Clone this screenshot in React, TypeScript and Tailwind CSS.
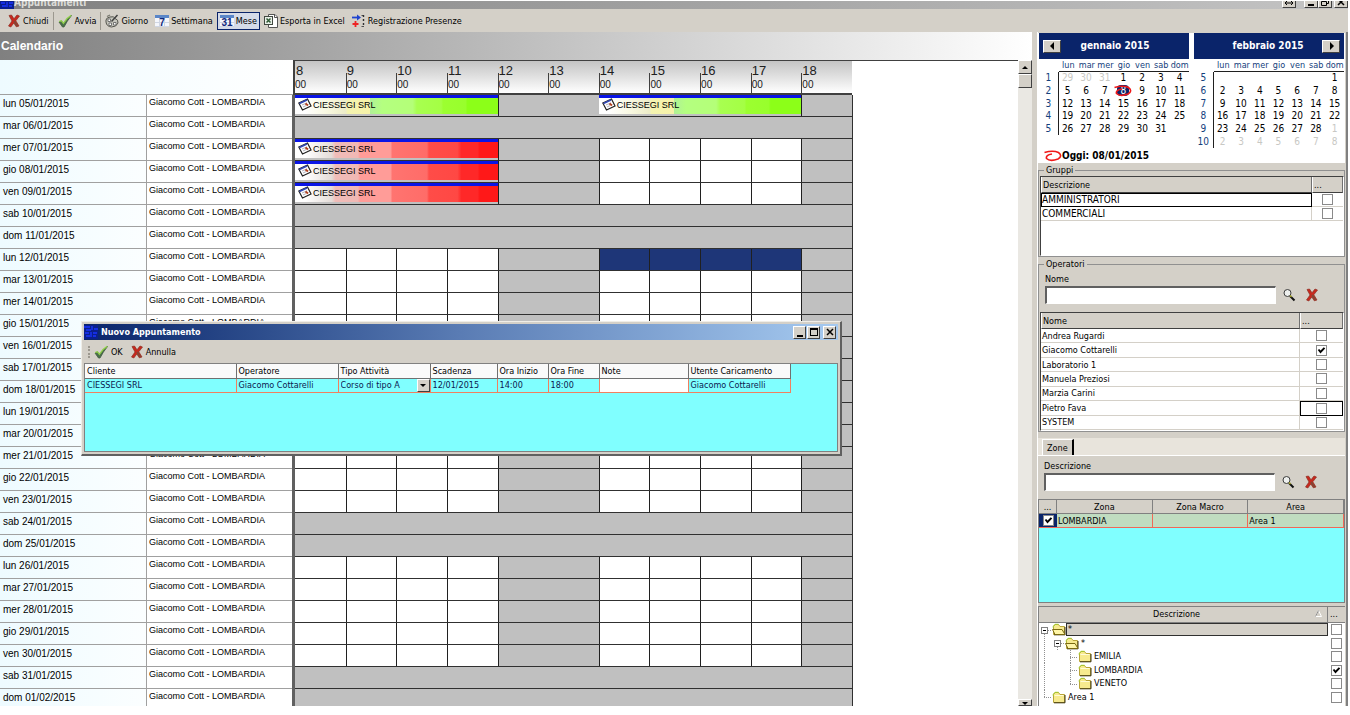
import React from 'react';
import clsx from 'clsx';

const TAHOMA = "font-['DejaVu_Sans_Condensed','DejaVu_Sans',sans-serif]";
const ARIAL = "font-['Liberation_Sans',sans-serif]";
const RAISED = 'border border-t-white border-l-white border-r-[#404040] border-b-[#404040] bg-[#d4d0c8]';

const HOURS = [8, 9, 10, 11, 12, 13, 14, 15, 16, 17, 18];

type Block = { start: number; color: 'green' | 'red' };
type Day = { label: string; holiday?: boolean; selected?: boolean; blocks?: Block[] };

const DAYS: Day[] = [
  { label: 'lun 05/01/2015', blocks: [{ start: 8, color: 'green' }, { start: 14, color: 'green' }] },
  { label: 'mar 06/01/2015', holiday: true },
  { label: 'mer 07/01/2015', blocks: [{ start: 8, color: 'red' }] },
  { label: 'gio 08/01/2015', blocks: [{ start: 8, color: 'red' }] },
  { label: 'ven 09/01/2015', blocks: [{ start: 8, color: 'red' }] },
  { label: 'sab 10/01/2015', holiday: true },
  { label: 'dom 11/01/2015', holiday: true },
  { label: 'lun 12/01/2015', selected: true },
  { label: 'mar 13/01/2015' },
  { label: 'mer 14/01/2015' },
  { label: 'gio 15/01/2015' },
  { label: 'ven 16/01/2015' },
  { label: 'sab 17/01/2015', holiday: true },
  { label: 'dom 18/01/2015', holiday: true },
  { label: 'lun 19/01/2015' },
  { label: 'mar 20/01/2015' },
  { label: 'mer 21/01/2015' },
  { label: 'gio 22/01/2015' },
  { label: 'ven 23/01/2015' },
  { label: 'sab 24/01/2015', holiday: true },
  { label: 'dom 25/01/2015', holiday: true },
  { label: 'lun 26/01/2015' },
  { label: 'mar 27/01/2015' },
  { label: 'mer 28/01/2015' },
  { label: 'gio 29/01/2015' },
  { label: 'ven 30/01/2015' },
  { label: 'sab 31/01/2015', holiday: true },
  { label: 'dom 01/02/2015', holiday: true },
];

const OPERATORS = ['Andrea Rugardi', 'Giacomo Cottarelli', 'Laboratorio 1', 'Manuela Preziosi', 'Marzia Carini', 'Pietro Fava', 'SYSTEM'];

/* ---------- icons ---------- */

const CrossIcon = () => (
  <svg width="14" height="14" viewBox="0 0 14 14" className="shrink-0">
    <path d="M2 1.5 L4.5 1 L7 4.8 L10 1 L12.5 2 L8.8 6.8 L12 12 L9.3 12.8 L6.8 9 L3.8 13 L1.5 12 L5 7 Z" fill="#c8281e" stroke="#8c2f22" strokeWidth=".7" />
    <path d="M7 7 L10.5 12" stroke="#7d4a38" strokeWidth="1.6" />
  </svg>
);

const CheckIcon = () => (
  <svg width="15" height="14" viewBox="0 0 15 14" className="shrink-0">
    <path d="M1 8 L3.5 7 L5.5 10 Q8.5 4.5 13.5 1.5 Q9 7 6 13 L4.5 13 Z" fill="#4a6f4a" stroke="#3f5a3f" strokeWidth=".8" />
    <path d="M1.2 7.6 L3.4 6.8 L5.4 9.4 Q8.5 4 13.2 1.4" fill="none" stroke="#8fd04a" strokeWidth="1.2" />
  </svg>
);

const PaletteIcon = () => (
  <svg width="14" height="14" viewBox="0 0 14 14" className="shrink-0">
    <path d="M1 6 Q1.5 3.5 5 3 Q9 1.8 10 4.5 Q13.5 5.5 13 9 Q11.5 13 6.5 13 Q1.5 12.5 1 8 Z" fill="#c6c6bd" stroke="#55554e" />
    <path d="M3 5 h2.5 v2.5 h-2.5 Z M4 9 h2.5 v2.5 h-2.5 Z M8.5 8.5 h2.5 v2.5 h-2.5 Z" fill="#fff" stroke="#5a5a5a" strokeWidth=".8" />
    <path d="M6.5 7.5 L12.5 1" stroke="#404040" strokeWidth="1.5" />
    <path d="M2 2.5 L5 1" stroke="#77776e" strokeWidth="1.3" />
  </svg>
);

const CalendarIcon = ({ text }: { text: string }) => (
  <svg width="14" height="14" viewBox="0 0 14 14" className="shrink-0">
    <rect x="0" y="1" width="14" height="12" fill="#f4f6fb" />
    <path d="M0 12.5 H14 M4.5 4 V13 M9.5 4 V13 M0 8.5 H14" stroke="#cfd6e4" />
    <rect x="0" y="1" width="14" height="3" fill="#5a86c8" />
    <text x="7" y="12" textAnchor="middle" fontFamily="Liberation Sans" fontSize="10" fontWeight="700" fill="#10287c">{text}</text>
  </svg>
);

const ExcelIcon = () => (
  <svg width="14" height="14" viewBox="0 0 14 14" className="shrink-0">
    <path d="M4.5 .5 H11 L13.5 3 V13.5 H4.5 Z" fill="#fff" stroke="#555" />
    <path d="M10.5 .5 V3.5 H13.5" fill="none" stroke="#555" />
    <rect x=".5" y="2.5" width="8" height="8" fill="#e8efe8" stroke="#404840" />
    <path d="M2.5 4.5 L6.5 8.5 M6.5 4.5 L2.5 8.5" stroke="#2f5a34" strokeWidth="1.5" />
  </svg>
);

const PresenceIcon = () => (
  <svg width="14" height="14" viewBox="0 0 14 14" className="shrink-0">
    <path d="M0 3.5 H6" stroke="#2044d0" strokeWidth="1.8" />
    <path d="M5 .5 L9 3.5 L5 6.5 Z" fill="#2044d0" />
    <path d="M3.5 7 V13 M.5 10 H6.5" stroke="#ee2424" strokeWidth="1.8" />
    <path d="M9.5 1.5 H12 M9.5 12.5 H12" stroke="#505050" />
    <path d="M11.5 1 V13" stroke="#303030" strokeWidth="1.4" strokeDasharray="2 2" />
  </svg>
);

const AppIcon = () => (
  <svg width="14" height="14" viewBox="0 0 14 14" className="shrink-0">
    <rect width="14" height="14" fill="#0a1f8c" />
    <path d="M0 2 H6 M8 1 V5 M2 5 H7 M10 4 H14 M1 8 H5 M7 7 V12 M9 8 H13 M2 11 H6 M9 11 H12" stroke="#1a35ff" strokeWidth="1.3" />
  </svg>
);

const NoteIcon = () => (
  <svg width="14" height="13" viewBox="0 0 14 13" className="shrink-0">
    <path d="M.8 5 L9.5 1 L13 8 L4.5 12 Z" fill="#fff" stroke="#202020" strokeWidth="1.2" />
    <path d="M1.5 5.5 L9 2" stroke="#3048b8" strokeWidth="1.4" />
    <path d="M4 7 L9 4.8 M5 9 L8 7.6" stroke="#9a9aa8" strokeWidth=".8" />
    <path d="M7.5 5.5 L10 7.5" stroke="#b04020" strokeWidth="2" />
  </svg>
);

const LensIcon = () => (
  <svg width="14" height="14" viewBox="0 0 14 14" className="shrink-0">
    <circle cx="5.5" cy="5" r="3.5" fill="#eef0ee" stroke="#3c3c3c" />
    <path d="M8 8 L12.5 12.5" stroke="#101010" strokeWidth="2" />
    <path d="M8 7.5 L9.5 9" stroke="#b4b428" strokeWidth="1.2" />
  </svg>
);

const FolderIcon = ({ open }: { open?: boolean }) => (
  <svg width="14" height="13" viewBox="0 0 14 13" className="shrink-0">
    <path d="M1.5 11.5 V3.5 L3 1.5 H6.5 L8 3.5 H12.5 V11.5 Z" fill="#f7ea8e" stroke="#b8a438" />
    <path d="M2 11.8 H13 V4" fill="none" stroke="#3c3410" />
    {open ? (
      <path d="M.5 6.5 H10 L13 11.5 H3 Z" fill="#fff6a8" stroke="#7a6a10" />
    ) : (
      <path d="M2.5 4.5 H11.5" stroke="#fffbd8" />
    )}
    <path d="M1.3 5 V3.3 L3 1.3 H6.5" fill="none" stroke="#a4cc30" />
  </svg>
);

const RedRing = () => (
  <svg width="18" height="12" viewBox="0 0 18 12" className="shrink-0">
    <path d="M.5 2.5 Q9 0 14.5 2.5 Q19 6 14 9 Q6 12 2.5 8.5 Q1.5 5 8 4" fill="none" stroke="#f01818" strokeWidth="1.6" />
  </svg>
);

const Arrow = ({ dir }: { dir: 'left' | 'right' | 'up' | 'down' }) => {
  const d = { left: 'M6 0 V8 L2 4 Z', right: 'M3 0 V8 L7 4 Z', up: 'M1 6 H7 L4 3 Z', down: 'M1 3 H7 L4 6 Z' }[dir];
  return (
    <svg width="8" height="8" viewBox="0 0 8 8" className="shrink-0">
      <path d={d} fill="#000" />
    </svg>
  );
};

/* ---------- small controls ---------- */

const CheckBox = ({ label, checked }: { label: string; checked?: boolean }) => (
  <span className="inline-grid h-[11px] w-[11px] align-top">
    <input
      type="checkbox"
      aria-label={label}
      defaultChecked={checked}
      className="peer m-0 h-[11px] w-[11px] appearance-none border border-[#8a8a8a] bg-white [grid-area:1/1]"
    />
    <svg viewBox="0 0 11 11" className="pointer-events-none invisible h-[11px] w-[11px] [grid-area:1/1] peer-checked:visible">
      <path d="M2.5 4.5 L4.5 7 L8.5 2.8" fill="none" stroke="#000" strokeWidth="1.9" />
    </svg>
  </span>
);

const ToolButton = ({ icon, children, active }: { icon: React.ReactNode; children: string; active?: boolean }) => (
  <button
    className={clsx(
      'flex h-[18px] items-center gap-[2px] whitespace-nowrap border px-[2px]',
      active ? 'border-[#0a246a] bg-[#d5dbe8]' : 'border-transparent',
    )}
  >
    {icon}
    {children}
  </button>
);

const Separator = () => <span className="h-[18px] w-px bg-[#9c988f]" />;

const SearchRow = ({ id, label }: { id: string; label: string }) => (
  <div className="pl-[6px]">
    <label htmlFor={id} className="block h-[15px] leading-[16px]">{label}</label>
    <div className="flex items-center">
      <input
        id={id}
        type="text"
        className="h-[18px] w-[231px] border-2 border-b border-r border-t-[#606060] border-l-[#606060] border-b-white border-r-white bg-white px-1"
      />
      <button aria-label="Cerca" className="ml-[6px]"><LensIcon /></button>
      <button aria-label="Azzera" className="ml-[9px]"><CrossIcon /></button>
    </div>
  </div>
);

/* ---------- schedule ---------- */

const EventBlock = ({ color }: { color: Block['color'] }) => (
  <div className="col-span-4 bg-[#c0c0c0]">
    <div
      className={clsx(
        'flex h-[19px] items-center gap-px border-t-[3px] border-[#0a14e6] pb-[3px] pl-[3px] text-[9px]',
        color === 'green'
          ? 'bg-[linear-gradient(90deg,#fff_5%,#f8f8e0_16%,#ececc8_25%,#f4f4b0_26%,#f6f2a8_37%,#b0f098_37%,#b4ff80_43%,#b4ff78_58%,#a8ff50_60%,#a4ff44_72%,#9cff30_73%,#98ff2c_84%,#8cff18_85%)]'
          : 'bg-[linear-gradient(90deg,#fff_5%,#e4dcd8_18%,#f0bcb8_20%,#f0b8b4_31%,#ff9c98_32%,#ff9c98_47%,#ff7470_48%,#ff6c68_65%,#ff4c48_66%,#ff4844_80%,#ff2828_82%,#ff2828_90%,#ff1818_91%)]',
      )}
    >
      <NoteIcon />
      <span className="whitespace-nowrap">CIESSEGI SRL</span>
    </div>
  </div>
);

const DayCells = ({ day }: { day: Day }) => {
  if (day.holiday) return <div className="h-[22px] w-[558px] border-b border-r border-[#303030] bg-[#c0c0c0]" />;

  const covered = (h: number) => day.blocks?.some((b) => h > b.start && h < b.start + 4);
  return (
    <div className="grid h-[22px] w-[558px] grid-cols-11 border-b border-r border-[#303030]">
      {HOURS.filter((h) => !covered(h)).map((h) => {
        const block = day.blocks?.find((b) => b.start === h);
        if (block) return <EventBlock key={h} color={block.color} />;
        const closed = h === 12 || h === 13 || h === 18;
        return (
          <div
            key={h}
            className={clsx(
              closed ? 'bg-[#c0c0c0]' : day.selected && h >= 14 ? 'bg-[#1e3678]' : 'bg-white',
              h !== 8 && h !== 13 && 'border-l border-[#202020]',
            )}
          />
        );
      })}
    </div>
  );
};

const Schedule = () => (
  <div className={clsx('flex min-h-0 flex-1 bg-white', ARIAL)}>
    <div className="min-w-0 flex-1 overflow-hidden">
      <div className="flex h-[35px]">
        <div className="w-[293px] border-b border-[#a0a0a0] bg-gradient-to-r from-[#eefbff] to-white" />
        <div className="grid w-[559px] grid-cols-11 border-b-2 border-l-2 border-t border-[#404040] bg-gradient-to-b from-[#c4c4c4] to-white">
          {HOURS.map((h) => (
            <div key={h} className="text-[#202020]">
              <div className="h-[12px] pl-px pt-[2px] text-[13px] leading-[15px]">{h}</div>
              <div className={clsx('h-[20px] pt-[4px] text-[10px] leading-[15px]', h !== 8 && 'border-l border-[#404040]')}>00</div>
            </div>
          ))}
        </div>
        <div className="flex-1 border-t border-[#404040]" />
      </div>
      {DAYS.map((day) => (
        <div key={day.label} className="flex">
          <div className="w-[146px] border-b border-[#a0a0a0] bg-gradient-to-r from-[#eefbff] to-[#fbfeff] pl-[3px] text-[10px] leading-[17px]">
            {day.label}
          </div>
          <div className="w-[146px] border-b border-l border-[#a0a0a0] bg-white pl-[2px] text-[9px] leading-[15px]">
            Giacomo Cott - LOMBARDIA
          </div>
          <div className="w-[3px] bg-[#606060]" />
          <DayCells day={day} />
        </div>
      ))}
    </div>
    <div className="flex w-[14px] flex-col overflow-hidden bg-[#eae8e3]">
      <button aria-label="Su" className={clsx('flex h-[14px] shrink-0 items-center justify-center', RAISED)}><Arrow dir="up" /></button>
      <div className={clsx('h-[14px] shrink-0', RAISED)} />
      <div className="flex-1" />
      <button aria-label="Giù" className={clsx('flex h-[7px] shrink-0 items-center justify-center overflow-hidden', RAISED)}><Arrow dir="down" /></button>
    </div>
  </div>
);

/* ---------- new appointment window ---------- */

const cell = 'border-b border-r border-[#f08060] p-0 pl-[2px] whitespace-nowrap';

const NewAppointment = () => (
  <section className="absolute left-[81px] top-[321px] flex h-[135px] w-[761px] flex-col border border-b-2 border-r-2 border-[#f0eee8] border-b-[#606060] border-r-[#606060] bg-[#d4d0c8] p-[2px]">
    <div className="flex h-[16px] items-center bg-gradient-to-r from-[#0a246a] via-[#5a7cb4] to-[#a6caf0] pr-[2px] font-bold text-white">
      <AppIcon />
      <h2 className="ml-[3px] flex-1">Nuovo Appuntamento</h2>
      <button aria-label="Riduci" className={clsx('flex h-[13px] w-[13px] items-end justify-center pb-px', RAISED)}><span className="h-[2px] w-[6px] bg-black" /></button>
      <button aria-label="Ingrandisci" className={clsx('ml-px flex h-[13px] w-[13px] items-center justify-center', RAISED)}><span className="h-[8px] w-[8px] border border-t-2 border-black" /></button>
      <button aria-label="Chiudi finestra" className={clsx('ml-[3px] flex h-[13px] w-[13px] items-center justify-center', RAISED)}>
        <svg width="8" height="8" viewBox="0 0 8 8"><path d="M1 1 L7 7 M7 1 L1 7" stroke="#000" strokeWidth="1.5" /></svg>
      </button>
    </div>
    <div className="flex h-[23px] items-center gap-px pl-[4px]">
      <span className="h-[12px] w-[2px] border-l-2 border-dotted border-[#9c988f]" />
      <ToolButton icon={<CheckIcon />}>OK</ToolButton>
      <ToolButton icon={<CrossIcon />}>Annulla</ToolButton>
    </div>
    <div className="flex-1 border border-[#808080] bg-[#80ffff]">
      <table className="w-[705px] table-fixed border-collapse text-left">
        <colgroup>
          <col className="w-[151px]" />
          <col className="w-[102px]" />
          <col className="w-[92px]" />
          <col className="w-[67px]" />
          <col className="w-[51px]" />
          <col className="w-[51px]" />
          <col className="w-[89px]" />
          <col className="w-[102px]" />
        </colgroup>
        <thead>
          <tr className="h-[14px] bg-[#fafafa]">
            {['Cliente', 'Operatore', 'Tipo Attività', 'Scadenza', 'Ora Inizio', 'Ora Fine', 'Note', 'Utente Caricamento'].map((h) => (
              <th key={h} className="whitespace-nowrap border-b border-r border-[#707070] p-0 pl-[2px] font-normal leading-[12px]">{h}</th>
            ))}
          </tr>
        </thead>
        <tbody>
          <tr className="h-[14px] leading-[13px] text-[#0c2050]">
            <td className={cell}>CIESSEGI SRL</td>
            <td className={cell}>Giacomo Cottarelli</td>
            <td className="border-b border-r border-[#f08060] p-0">
              <div className="flex items-center pl-[2px]">
                <select aria-label="Tipo Attività" defaultValue="A" className="w-[76px] appearance-none">
                  <option value="A">Corso di tipo A</option>
                </select>
                <span className={clsx('flex h-[13px] w-[13px] items-center justify-center', RAISED)}><Arrow dir="down" /></span>
              </div>
            </td>
            <td className={cell}>12/01/2015</td>
            <td className={cell}>14:00</td>
            <td className={cell}>18:00</td>
            <td className={clsx(cell, 'bg-white')} />
            <td className={cell}>Giacomo Cottarelli</td>
          </tr>
        </tbody>
      </table>
    </div>
  </section>
);

/* ---------- side panel ---------- */

type MonthProps = { title: string; weeks: number[]; days: (number | null)[]; muted: [number, number]; today?: number; nav: 'left' | 'right' };

const Month = ({ title, weeks, days, muted, today, nav }: MonthProps) => (
  <div className="w-[150px]">
    <div className={clsx('flex h-[26px] items-center bg-[#0a246a] px-[4px] text-[10px] font-bold text-white', nav === 'right' && 'flex-row-reverse')}>
      <button aria-label={nav === 'left' ? 'Mese precedente' : 'Mese successivo'} className={clsx('flex h-[13px] w-[18px] items-center justify-center', RAISED)}>
        <Arrow dir={nav} />
      </button>
      <span className="flex-1 text-center">{title}</span>
      <span className="w-[16px]" />
    </div>
    <div className="grid grid-cols-[20px_1fr] pt-px text-[#14407c]">
      <span />
      <div className="grid grid-cols-7 border-b border-[#202020] text-center leading-[11px]">
        {['lun', 'mar', 'mer', 'gio', 'ven', 'sab', 'dom'].map((d) => <span key={d}>{d}</span>)}
      </div>
    </div>
    <table className="h-[76px] w-full table-fixed border-collapse text-center text-[10px] leading-[12px]">
      <tbody>
        {[0, 1, 2, 3, 4, 5].map((r) => (
          <tr key={r} className="h-[12px]">
            <td className={clsx('w-[19px] p-0 text-[#14407c]', weeks[r] && 'border-r border-[#202020]')}>{weeks[r]}</td>
            {Array.from({ length: 7 }, (_, c) => {
              const i = r * 7 + c;
              const d = days[i];
              return (
                <td key={c} className={clsx('p-0', (i < muted[0] || i >= muted[1]) && 'text-[#c8c8c4]')}>
                  {d && d === today && i >= muted[0] ? (
                    <span className="relative mx-auto block h-[11px] w-[12px] rounded-[4px] bg-[#0a246a] leading-[11px] text-white">
                      {d}
                      <span className="absolute -left-[3px] top-0"><RedRing /></span>
                    </span>
                  ) : d}
                </td>
              );
            })}
          </tr>
        ))}
      </tbody>
    </table>
  </div>
);

const range = (from: number, to: number) => Array.from({ length: to - from + 1 }, (_, i) => from + i);

const headCell = 'border border-t-0 border-l-white border-r-[#707070] border-b-[#404040] p-0 pl-px text-left font-normal bg-[#d4d0c8]';

const GroupsTable = () => (
  <div className="ml-px h-[80px] border border-r-white border-t-[#404040] border-l-[#404040] border-b-white bg-white">
    <table className="w-full table-fixed border-separate border-spacing-0 leading-[12px]">
      <thead>
        <tr className="h-[16px]">
          <th className={headCell}>Descrizione</th>
          <th className={clsx(headCell, 'w-[31px]')}>...</th>
        </tr>
      </thead>
      <tbody>
        <tr className="h-[14px] text-[10px]">
          <td className="border border-black p-0">AMMINISTRATORI</td>
          <td className="border-b border-[#d4d0c8] p-0 text-center leading-[11px]"><CheckBox label="AMMINISTRATORI" /></td>
        </tr>
        <tr className="h-[14px] text-[10px]">
          <td className="border-b border-r border-[#d4d0c8] p-0 pl-px">COMMERCIALI</td>
          <td className="border-b border-[#d4d0c8] p-0 text-center leading-[11px]"><CheckBox label="COMMERCIALI" /></td>
        </tr>
      </tbody>
    </table>
  </div>
);

const OperatorsTable = () => (
  <div className="ml-px h-[119px] border border-r-white border-t-[#404040] border-l-[#404040] border-b-white bg-white">
    <table className="h-[117px] w-full table-fixed border-separate border-spacing-0 leading-[12px]">
      <thead>
        <tr className="h-[16px]">
          <th className={headCell}>Nome</th>
          <th className={clsx(headCell, 'w-[43px]')}>...</th>
        </tr>
      </thead>
      <tbody>
        {OPERATORS.map((name) => (
          <tr key={name}>
            <td className="border-b border-r border-[#d4d0c8] p-0 pl-px">{name}</td>
            <td className={clsx('p-0 text-center leading-[11px]', name === 'Pietro Fava' ? 'border border-black' : 'border-b border-[#d4d0c8]')}>
              <CheckBox label={name} checked={name === 'Giacomo Cottarelli'} />
            </td>
          </tr>
        ))}
      </tbody>
    </table>
  </div>
);

const ZonesTable = () => (
  <div className="h-[104px] shrink-0 border border-[#808080] bg-[#80ffff]">
    <table className="w-full table-fixed border-separate border-spacing-0 leading-[12px]">
      <thead>
        <tr className="h-[14px]">
          {['...', 'Zona', 'Zona Macro', 'Area'].map((h, i) => (
            <th key={h} className={clsx('border-b border-r border-[#808080] bg-[#d4d0c8] p-0 font-normal', i === 0 && 'w-[18px]')}>{h}</th>
          ))}
        </tr>
      </thead>
      <tbody>
        <tr className="h-[14px] bg-[#c0dcc0]">
          <td className="border-b border-[#f06858] bg-[#0a246a] p-0 text-center leading-[11px]"><CheckBox label="LOMBARDIA" checked /></td>
          <td className="border-b border-r border-[#f06858] p-0 pl-px">LOMBARDIA</td>
          <td className="border-b border-r border-[#f06858] p-0" />
          <td className="border-b border-r border-[#f06858] p-0 pl-px">Area 1</td>
        </tr>
      </tbody>
    </table>
  </div>
);

type Branch = 'minus' | 'line' | 'tee' | 'end' | 'blank';

const Connector = ({ kind }: { kind: Branch }) => {
  const lines = { minus: 'M5.5 7 V14 M5 7.5 H13', line: 'M5.5 0 V14', tee: 'M5.5 0 V14 M5 7.5 H13', end: 'M5.5 0 V7 M5 7.5 H13', blank: '' }[kind];
  return (
    <svg width="13" height="14" viewBox="0 0 13 14" className="shrink-0">
      <path d={lines} fill="none" stroke="#909090" strokeDasharray="1 1" />
      {kind === 'minus' && (
        <>
          <rect x="2.5" y="4.5" width="6" height="6" fill="#fff" stroke="#808080" />
          <path d="M4 7.5 H7" stroke="#000" />
        </>
      )}
    </svg>
  );
};

const TREE: { name: string; branch: Branch[]; open?: boolean; checked?: boolean; selected?: boolean }[] = [
  { name: '*', branch: ['minus'], open: true, selected: true },
  { name: '*', branch: ['line', 'minus'], open: true },
  { name: 'EMILIA', branch: ['line', 'blank', 'tee'] },
  { name: 'LOMBARDIA', branch: ['line', 'blank', 'tee'], checked: true },
  { name: 'VENETO', branch: ['line', 'blank', 'end'] },
  { name: 'Area 1', branch: ['end'] },
];

const ZoneTree = () => (
  <div className="min-h-0 flex-1 overflow-hidden border-l border-t border-[#808080] bg-white">
    <div className="flex h-[16px] border-b border-[#808080] bg-[#d4d0c8] leading-[15px]">
      <span className="flex-1 text-center">Descrizione</span>
      <svg width="10" height="12" viewBox="0 0 10 12"><path d="M1.5 9.5 L4.5 3.5 L7.5 9.5 Z" fill="none" stroke="#fff" /><path d="M1.5 9.5 L4.5 3.5" stroke="#909090" /></svg>
      <span className="ml-[3px] w-[18px] border-l border-[#808080] pl-[2px]">...</span>
    </div>
    <ul className="grid h-[81px] grid-rows-6">
      {TREE.map((node, i) => (
        <li key={i} className="flex items-center">
          {node.branch.map((kind, b) => <Connector key={b} kind={kind} />)}
          <FolderIcon open={node.open} />
          <span className={clsx('h-[13px] flex-1 border pl-px leading-[11px]', node.selected ? 'border-[#303030] bg-[#d4d0c8]' : 'border-transparent')}>
            {node.name}
          </span>
          <span className="ml-[3px] mr-[3px] leading-[11px]"><CheckBox label={`${node.name} ${i}`} checked={node.checked} /></span>
        </li>
      ))}
    </ul>
  </div>
);

const SidePanel = () => (
  <aside className="flex w-[310px] shrink-0 flex-col border-r-2 border-[#808080] bg-[#d4d0c8] pr-px pt-px">
    <div className="h-[130px] bg-white pl-px">
      <div className="flex gap-[5px]">
        <Month
          title="gennaio 2015"
          weeks={[1, 2, 3, 4, 5]}
          days={[29, 30, 31, ...range(1, 31)]}
          muted={[3, 42]}
          today={8}
          nav="left"
        />
        <Month
          title="febbraio 2015"
          weeks={[5, 6, 7, 8, 9, 10]}
          days={[null, null, null, null, null, null, ...range(1, 28), ...range(1, 8)]}
          muted={[0, 34]}
          nav="right"
        />
      </div>
      <div className="flex h-[15px] items-center pl-[5px] text-[10px] font-bold"><RedRing />Oggi: 08/01/2015</div>
    </div>

    <fieldset className="mt-px min-w-0 border border-[#909090]">
      <legend className="ml-[5px] px-[2px] leading-[12px]">Gruppi</legend>
      <GroupsTable />
    </fieldset>

    <fieldset className="mt-px min-w-0 border border-[#909090]">
      <legend className="ml-[5px] px-[2px] leading-[12px]">Operatori</legend>
      <div className="pt-px"><SearchRow id="operatore" label="Nome" /></div>
      <div className="mt-[8px]"><OperatorsTable /></div>
    </fieldset>

    <div className="mt-[6px] flex h-[18px] shrink-0 items-end border-b border-white bg-[#e8e4dc] pl-[4px]">
      <button className="h-[16px] border-l border-r-2 border-t border-l-white border-r-black border-t-white bg-[#d4d0c8] px-[4px]">Zone</button>
    </div>
    <div className="mb-[8px] mt-[2px]"><SearchRow id="zona" label="Descrizione" /></div>
    <ZonesTable />
    <div className="h-[3px] shrink-0" />
    <ZoneTree />
  </aside>
);

/* ---------- page ---------- */

export default function App() {
  return (
    <div className={clsx('relative flex h-screen flex-col overflow-hidden bg-white pb-[9px] pr-[2px] pt-px text-[9px] leading-[12px] text-black', TAHOMA)}>
      <header className="flex h-[8px] shrink-0 items-end overflow-hidden bg-gradient-to-r from-[#808080] to-[#c4c4c4] font-bold text-[#dcdcd8]">
        <AppIcon />
        <h1 className="flex-1 text-[10px] leading-[12px]">Appuntamenti</h1>
        <div className="flex h-[12px] pb-px">
          <button aria-label="Affianca" className={clsx('mr-[8px] flex w-[14px] items-end justify-center', RAISED)}>
            <svg width="10" height="8" viewBox="0 0 10 8"><path d="M1 4 H9 M3 2 L1 4 L3 6 M7 2 L9 4 L7 6" fill="none" stroke="#000" /></svg>
          </button>
          <button aria-label="Riduci" className={clsx('flex w-[14px] items-end justify-center pb-px', RAISED)}><span className="h-[2px] w-[6px] bg-black" /></button>
          <button aria-label="Ripristina" className={clsx('flex w-[14px] items-end justify-center pb-px', RAISED)}>
            <svg width="8" height="8" viewBox="0 0 8 8"><path d="M2.5 2.5 V.5 H7.5 V5.5 H5.5 M.5 3.5 H5.5 V7.5 H.5 Z" fill="none" stroke="#000" /></svg>
          </button>
          <button aria-label="Chiudi" className={clsx('ml-[2px] flex w-[14px] items-end justify-center pb-px', RAISED)}>
            <svg width="8" height="8" viewBox="0 0 8 8"><path d="M1 1 L7 7 M7 1 L1 7" stroke="#000" strokeWidth="1.5" /></svg>
          </button>
        </div>
      </header>

      <nav className="flex h-[23px] shrink-0 items-center gap-px bg-[#d4d0c8] pl-[4px]">
        <ToolButton icon={<CrossIcon />}>Chiudi</ToolButton>
        <Separator />
        <ToolButton icon={<CheckIcon />}>Avvia</ToolButton>
        <Separator />
        <ToolButton icon={<PaletteIcon />}>Giorno</ToolButton>
        <ToolButton icon={<CalendarIcon text="7" />}>Settimana</ToolButton>
        <ToolButton icon={<CalendarIcon text="31" />} active>Mese</ToolButton>
        <ToolButton icon={<ExcelIcon />}>Esporta in Excel</ToolButton>
        <ToolButton icon={<PresenceIcon />}>Registrazione Presenze</ToolButton>
      </nav>

      <main className="flex min-h-0 flex-1">
        <div className="flex min-w-0 flex-1 flex-col">
          <h2 className={clsx('h-[28px] shrink-0 bg-gradient-to-r from-[#808080] to-white pl-px text-[12px] font-bold leading-[28px] text-white', ARIAL)}>
            Calendario
          </h2>
          <Schedule />
        </div>
        <div className="w-[6px] shrink-0 border-r border-white bg-[#d4d0c8]" />
        <SidePanel />
      </main>

      <NewAppointment />
    </div>
  );
}
